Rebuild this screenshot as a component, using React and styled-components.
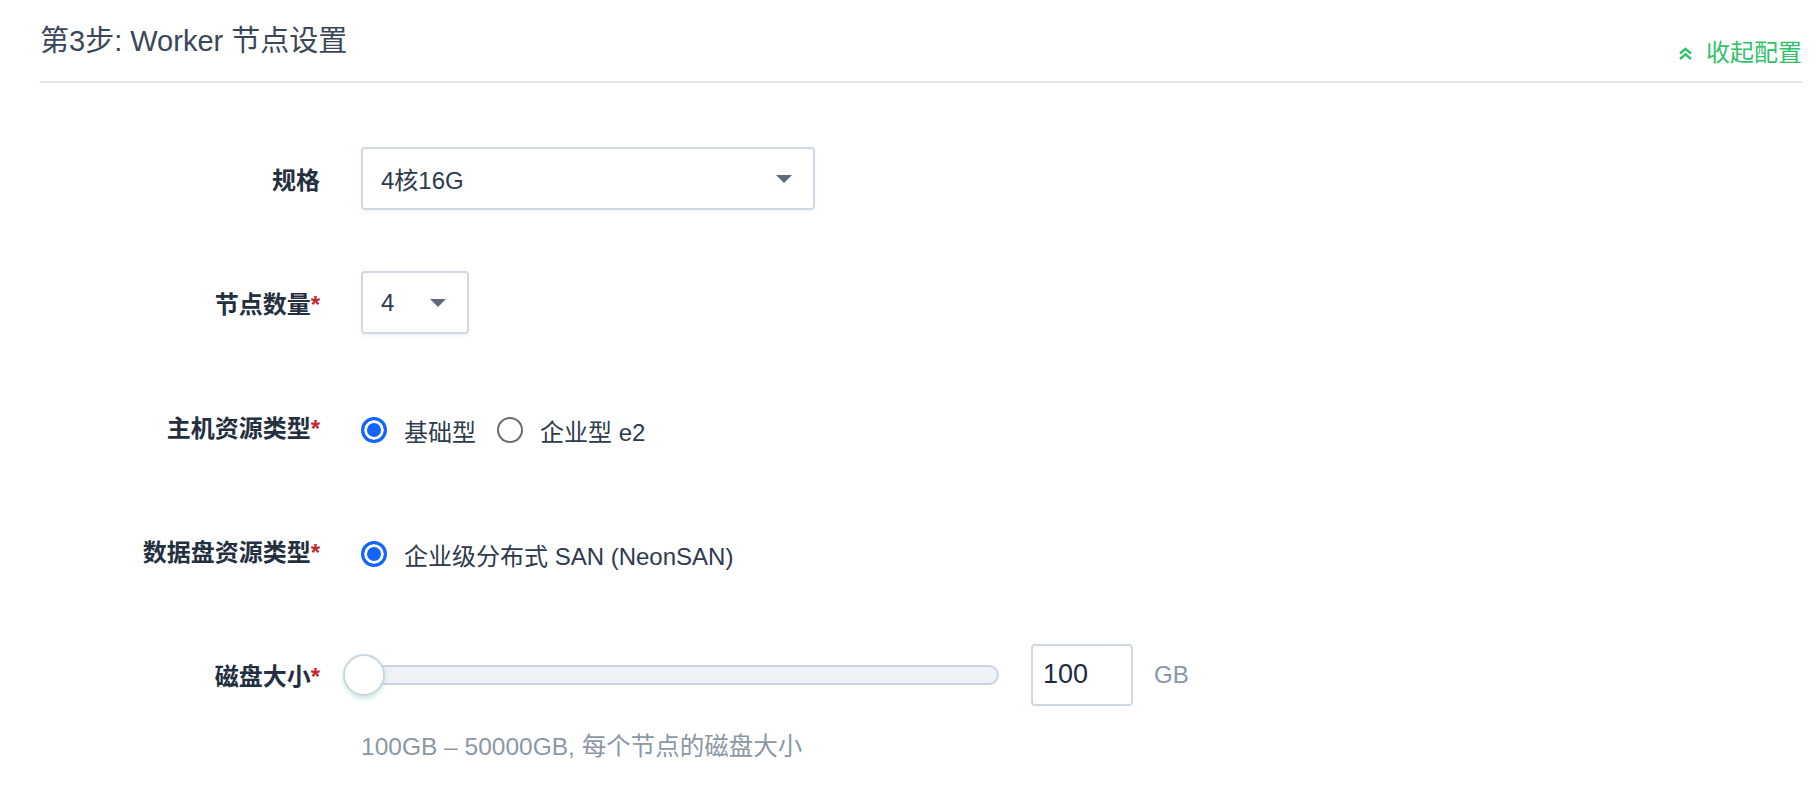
import React from "react"
import styled, { createGlobalStyle } from "styled-components"

const font = `"Liberation Sans", "Noto Sans CJK SC", sans-serif`

const GlobalStyle = createGlobalStyle`
  body {
    margin: 0;
    background: #fff;
    font-family: ${font};
  }
`

const Page = styled.div`
  padding: 0 16px 0 40px;
`

const Header = styled.div`
  display: flex;
  justify-content: space-between;
  align-items: flex-start;
  height: 81px;
  border-bottom: 2px solid #dfe6ee;
`

const Title = styled.h3`
  margin: 21px 0 0;
  font-size: 29px;
  line-height: 40px;
  font-weight: 400;
  color: #3b4759;
`

const Collapse = styled.a`
  display: flex;
  align-items: center;
  gap: 13px;
  margin-top: 37px;
  font-size: 24px;
  line-height: 32px;
  color: #2fc26b;
  cursor: pointer;
`

const Form = styled.div`
  display: flex;
  flex-direction: column;
  gap: 61px;
  padding-top: 64px;
`

const Row = styled.div`
  display: grid;
  grid-template-columns: 280px 1fr;
  column-gap: 41px;
  align-items: center;
  min-height: 63px;
`

const Label = styled.label`
  text-align: right;
  font-size: 24px;
  font-weight: 700;
  color: #242f3f;
`

const Required = styled.span`
  color: #c4262e;
`

const Select = styled.div`
  box-sizing: border-box;
  display: flex;
  align-items: center;
  justify-content: space-between;
  width: ${(p) => p.$width}px;
  height: 63px;
  padding: 0 21px 0 18px;
  border: 2px solid #cfd8e3;
  border-radius: 4px;
  box-shadow: 0 2px 4px rgba(36, 46, 66, 0.06);
  font-size: 24px;
  color: #2e3a4d;
`

const Caret = styled.span`
  width: 0;
  height: 0;
  border-left: 8px solid transparent;
  border-right: 8px solid transparent;
  border-top: 8px solid #5f6b7a;
`

const Radios = styled.div`
  display: flex;
  align-items: center;
  gap: 21px;
  margin-top: 7px;
`

const RadioItem = styled.span`
  display: flex;
  align-items: center;
  gap: 17px;
  font-size: 24px;
  color: #2e3a4d;
`

const RadioDot = styled.span`
  box-sizing: border-box;
  width: 26px;
  height: 26px;
  border-radius: 50%;
  border: ${(p) => (p.$checked ? "3px solid #1464ff" : "2px solid #666b73")};
  background: ${(p) => (p.$checked ? "#1464ff" : "#fff")};
  box-shadow: ${(p) => (p.$checked ? "inset 0 0 0 3px #fff" : "none")};
`

const SliderLine = styled.div`
  display: flex;
  align-items: center;
`

const Track = styled.div`
  position: relative;
  box-sizing: border-box;
  width: 638px;
  height: 20px;
  border: 2px solid #c9d4e0;
  border-radius: 10px;
  background: #eef1f6;
`

const Thumb = styled.span`
  position: absolute;
  left: -20px;
  top: 50%;
  box-sizing: border-box;
  width: 42px;
  height: 42px;
  margin-top: -21px;
  border-radius: 50%;
  border: 2px solid #c8d6e2;
  background: #fff;
  box-shadow: 0 3px 4px rgba(85, 188, 138, 0.28);
`

const NumberBox = styled.div`
  box-sizing: border-box;
  width: 102px;
  height: 62px;
  margin-left: 32px;
  padding-left: 10px;
  display: flex;
  align-items: center;
  border: 2px solid #cfd8e3;
  border-radius: 4px;
  font-size: 27px;
  color: #1f2a3f;
`

const Unit = styled.span`
  margin-left: 21px;
  font-size: 24px;
  color: #8796a8;
`

const Hint = styled.div`
  grid-column: 2;
  margin-top: 19px;
  font-size: 24.5px;
  line-height: 32px;
  color: #8c97a5;
`

const ChevronsUp = () => (
  <svg width="15" height="13" viewBox="0 0 15 13" fill="none" stroke="currentColor" strokeWidth="2.4">
    <polyline points="2,6.5 7.5,1.8 13,6.5" />
    <polyline points="2,12 7.5,7.3 13,12" />
  </svg>
)

const Radio = ({ checked, children }) => (
  <RadioItem>
    <RadioDot $checked={checked} />
    {children}
  </RadioItem>
)

const App = () => (
  <Page>
    <GlobalStyle />
    <Header>
      <Title>第3步: Worker 节点设置</Title>
      <Collapse>
        <ChevronsUp />
        收起配置
      </Collapse>
    </Header>
    <Form>
      <Row>
        <Label>规格</Label>
        <Select $width={454}>
          4核16G
          <Caret />
        </Select>
      </Row>
      <Row>
        <Label>
          节点数量<Required>*</Required>
        </Label>
        <Select $width={108}>
          4
          <Caret />
        </Select>
      </Row>
      <Row>
        <Label>
          主机资源类型<Required>*</Required>
        </Label>
        <Radios>
          <Radio checked>基础型</Radio>
          <Radio>企业型 e2</Radio>
        </Radios>
      </Row>
      <Row>
        <Label>
          数据盘资源类型<Required>*</Required>
        </Label>
        <Radios>
          <Radio checked>企业级分布式 SAN (NeonSAN)</Radio>
        </Radios>
      </Row>
      <div>
        <Row>
          <Label>
            磁盘大小<Required>*</Required>
          </Label>
          <SliderLine>
            <Track>
              <Thumb />
            </Track>
            <NumberBox>100</NumberBox>
            <Unit>GB</Unit>
          </SliderLine>
        </Row>
        <Row>
          <Hint>100GB – 50000GB, 每个节点的磁盘大小</Hint>
        </Row>
      </div>
    </Form>
  </Page>
)

export default App
